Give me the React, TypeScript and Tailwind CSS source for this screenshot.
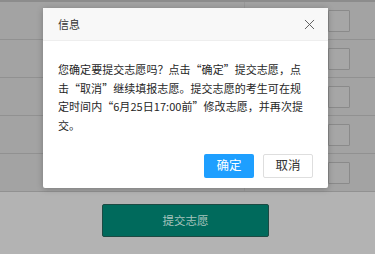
import { X } from 'lucide-react';

const rows = [0, 1, 2, 3, 4];

// full-width CJK style quotes: opening glyph sits right, closing glyph sits left
function Q({ open }: { open?: boolean }) {
  return (
    <span className={`inline-block w-[1em] ${open ? 'text-right' : 'text-left'}`}>
      {open ? '“' : '”'}
    </span>
  );
}

export default function App() {
  return (
    <div
      className="relative w-[375px] h-[254px] overflow-hidden bg-[#b3b3b3]"
      style={{ fontFamily: '"Noto Sans CJK SC", "Noto Sans", sans-serif' }}
    >
      {/* dimmed table behind the dialog */}
      <div className="h-[2px] bg-[#8c8c8c]" />
      <div className="bg-[#a3a3a3]">
        {rows.map((r) => (
          <div key={r} className="flex h-[38px] border-b border-[#919191]">
            <div className="w-[245px] border-r border-[#999]" />
            <div className="flex-1 flex items-center justify-end pr-[25px]">
              <div className="w-[22px] h-[22px] border border-[#8a8a8a] bg-[#a6a6a6] rounded-[1px]" />
            </div>
          </div>
        ))}
      </div>
      <div className="flex justify-center pt-[12px]">
        <button className="w-[167px] h-[33px] mr-[4px] bg-[#006a5c] border border-[#1d4a43] rounded-[2px] text-[11.5px] text-[#a6c3bc]">
          提交志愿
        </button>
      </div>

      {/* dialog */}
      <div className="absolute left-[43px] top-[8px] w-[285px] bg-white shadow-[0_1px_6px_rgba(0,0,0,0.25)] rounded-[2px]">
        <div className="h-[33px] flex items-center justify-between pl-[15px] pr-[10px] bg-[#f8f8f8] border-b border-[#eeeeee]">
          <span className="text-[11px] text-[#333]">信息</span>
          <X className="w-[17px] h-[17px] text-[#555]" strokeWidth={1.3} />
        </div>
        <div className="pt-[19px] px-[15px] text-[11px] tracking-[0.05px] leading-[18.7px] text-[#262626]">
          <div className="whitespace-nowrap">
            您确定要提交志愿吗？点击<Q open />确定<Q />提交志愿，点
          </div>
          <div className="whitespace-nowrap">
            击<Q open />取消<Q />继续填报志愿。提交志愿的考生可在规
          </div>
          <div className="whitespace-nowrap">
            定时间内<Q open />6月25日17:00前<Q />修改志愿，并再次提
          </div>
          <div className="whitespace-nowrap">交。</div>
        </div>
        <div className="flex justify-end gap-[9px] pt-[19px] pb-[10px] pr-[15px]">
          <button className="w-[50px] h-[24px] bg-[#1e9fff] text-white text-[12.5px] rounded-[2px]">确定</button>
          <button className="w-[50px] h-[24px] bg-white border border-[#dedede] text-[#333] text-[12.5px] rounded-[2px]">取消</button>
        </div>
      </div>
    </div>
  );
}
